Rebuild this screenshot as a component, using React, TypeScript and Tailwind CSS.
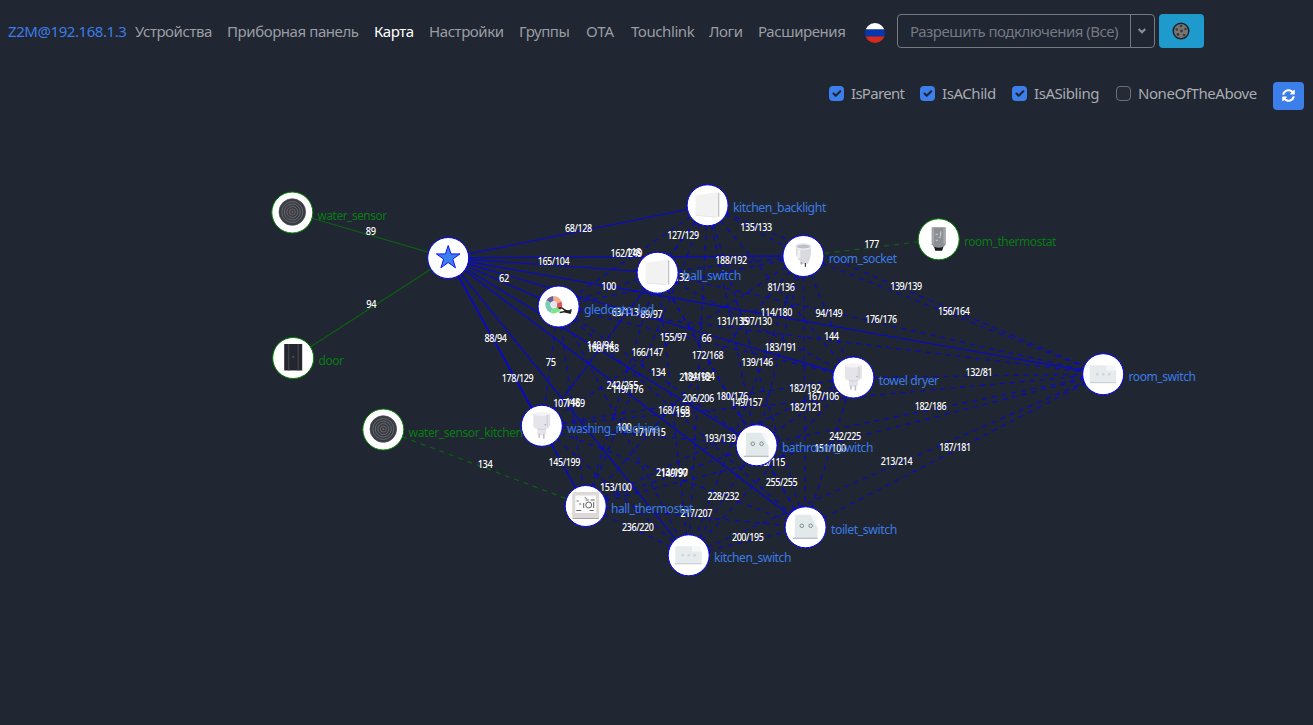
import React from "react";

type Kind = "star" | "water" | "door" | "square" | "socket" | "plug" | "thermo" | "valve" | "triple" | "double" | "led";
type NodeDef = { x: number; y: number; name?: string; width?: number; kind: Kind; end?: boolean };

const nodes: Record<string, NodeDef> = {
  star: { x: 448.2, y: 258, kind: "star" },
  ws: { x: 292.3, y: 212.5, name: "water_sensor", width: 69, kind: "water", end: true },
  door: { x: 293.2, y: 358, name: "door", width: 25, kind: "door", end: true },
  wsk: { x: 383.3, y: 429.5, name: "water_sensor_kitchen", width: 114, kind: "water", end: true },
  rt: { x: 938.7, y: 239.3, name: "room_thermostat", width: 92, kind: "valve", end: true },
  kb: { x: 707.6, y: 205.3, name: "kitchen_backlight", width: 93, kind: "square" },
  hs: { x: 657.6, y: 272.7, name: "hall_switch", width: 58, kind: "square" },
  rs: { x: 803.4, y: 256, name: "room_socket", width: 68, kind: "socket" },
  gl: { x: 558.6, y: 306.5, name: "gledopto_led", width: 70, kind: "led" },
  wm: { x: 541.8, y: 425.8, name: "washing_machine", width: 93, kind: "plug" },
  ht: { x: 585.7, y: 506, name: "hall_thermostat", width: 82, kind: "thermo" },
  ks: { x: 688.7, y: 555.3, name: "kitchen_switch", width: 77, kind: "triple" },
  ts: { x: 805.6, y: 527.3, name: "toilet_switch", width: 66, kind: "double" },
  bs: { x: 756.6, y: 445.3, name: "bathroom_switch", width: 91, kind: "double" },
  td: { x: 853.4, y: 377.5, name: "towel dryer", width: 60, kind: "plug" },
  rw: { x: 1103.2, y: 374.2, name: "room_switch", width: 67, kind: "triple" },
};

const links: [string, string, string][] = [
  ["ws", "star", "89"], ["door", "star", "94"], ["wsk", "ht", "134"], ["rt", "rs", "177"],
  ["star", "kb", "68/128"], ["star", "rs", "162/249"], ["star", "hs", "165/104"], ["star", "gl", "62"],
  ["star", "rw", "114/180"], ["star", "td", "89/97"], ["star", "bs", "166/168"], ["star", "ts", "119/176"],
  ["star", "ks", "107/169"], ["star", "ht", "178/129"], ["star", "wm", "88/94"],
  ["kb", "gl", "118"], ["kb", "wm", "63/113"], ["kb", "hs", "127/129"], ["kb", "rs", "135/133"],
  ["kb", "td", "81/136"], ["kb", "rw", "139/139"], ["kb", "bs", "131/135"], ["kb", "ts", "139/146"],
  ["kb", "ks", "184/184"], ["kb", "ht", "166/147"],
  ["hs", "rs", "188/192"], ["hs", "gl", "100"], ["hs", "wm", "140/94"], ["hs", "ht", "242/255"],
  ["hs", "ks", "168/168"], ["hs", "ts", "180/176"], ["hs", "bs", "172/168"], ["hs", "td", "197/130"], ["hs", "rw", "176/176"],
  ["rs", "gl", "132"], ["rs", "wm", "155/97"], ["rs", "ht", "212/192"], ["rs", "ks", "149/157"],
  ["rs", "ts", "182/192"], ["rs", "bs", "183/191"], ["rs", "td", "94/149"], ["rs", "rw", "156/164"],
  ["gl", "rw", "144"], ["gl", "td", "66"], ["gl", "bs", "134"], ["gl", "ts", "153"], ["gl", "ks", "100"],
  ["gl", "ht", "148"], ["gl", "wm", "75"],
  ["wm", "td", "206/206"], ["wm", "bs", "171/115"], ["wm", "ts", "149/97"], ["wm", "ks", "153/100"],
  ["wm", "ht", "145/199"], ["wm", "rw", "167/106"],
  ["ht", "td", "193/139"], ["ht", "bs", "213/190"], ["ht", "ts", "217/207"], ["ht", "ks", "236/220"], ["ht", "rw", "242/225"],
  ["ks", "bs", "228/232"], ["ks", "ts", "200/195"], ["ks", "td", "98/115"], ["ks", "rw", "213/214"],
  ["bs", "ts", "255/255"], ["bs", "td", "182/121"], ["bs", "rw", "182/186"],
  ["ts", "td", "151/100"], ["ts", "rw", "187/181"], ["td", "rw", "132/81"],
];

function Device({ kind }: { kind: Kind }) {
  switch (kind) {
    case "star":
      return <path d="M0-12.5 2.8-4.1H11.8L4.6 1.1 7.3 9.8 0 4.5-7.3 9.8-4.6 1.1-11.8-4.1H-2.8Z" fill="#3c7eea" stroke="#0000ff" strokeWidth=".9" />;
    case "water":
      return (
        <g fill="none" stroke="#777a80" strokeWidth=".7">
          <circle r="13.3" cy="-.5" fill="#383b42" stroke="#4a4d53" />
          <circle r="10.5" cy="-.5" />
          <circle r="8" cy="-.5" />
          <circle r="5.5" cy="-.5" />
          <circle r="3" cy="-.5" />
          <circle r=".9" cy="-.5" fill="#a8524d" stroke="none" />
        </g>
      );
    case "door":
      return (
        <g>
          <rect x="-9" y="-14" width="18" height="26.5" fill="#23252f" />
          <path d="M-4.500-14V12.500M5-14V12.500" stroke="#41434d" strokeWidth="1.2" />
          <circle r="1.2" cy="-1" fill="#474a53" />
        </g>
      );
    case "square":
      return (
        <g>
          <path d="M-12-10 10-13 12-12V11L9 12-12 10Z" fill="#f2f2f2" />
          <path d="M11-12.500V11.500" stroke="#c5c5c7" strokeWidth="1.2" />
          <path d="M-12 10 9 12" stroke="#e2e2e2" strokeWidth=".8" />
        </g>
      );
    case "socket":
      return (
        <g>
          <path d="M-7.500-9.500V-2Q-6.500 2-3.500 5L-2 8H4Q7 4 7.500-2V-9.500Z" fill="#d9d9e0" />
          <path d="M-4.500-6V2" stroke="#f0f0f5" strokeWidth="3" />
          <ellipse cy="-9.500" rx="7.500" ry="2.800" fill="#bfbfc7" stroke="#ececf1" strokeWidth="1.400" />
          <path d="M-2 6V8.500" stroke="#9a9aa2" strokeWidth="1.500" />
          <path d="M2 7V11" stroke="#44444a" strokeWidth="1.200" />
        </g>
      );
    case "plug":
      return (
        <g>
          <path d="M-8.500-12Q0-15.500 8.500-12V0Q7 3 4.500 3V8Q0 11-4.500 8V3Q-8 3-8.500 0Z" fill="#e6e4eb" />
          <ellipse cy="-12" rx="8" ry="2" fill="#f4f3f7" />
          <path d="M-4.500 3Q0 4.500 4.500 3" stroke="#cbc9d2" fill="none" strokeWidth=".9" />
          <path d="M5.500-11V1" stroke="#d6d4dd" strokeWidth="2" />
          <path d="M-2.500 8V12M2 8V13" stroke="#c1bfc8" strokeWidth="1.600" />
          <circle cx="3.500" cy="-1" r=".8" fill="#a9a7b0" />
        </g>
      );
    case "thermo":
      return (
        <g>
          <rect x="-13.500" y="-14" width="27" height="27" rx="2" fill="#dcd9d8" />
          <rect x="-10.500" y="-10.500" width="21" height="17.500" fill="#fbfbfb" />
          <path d="M-13 12.500H13" stroke="#aaa49f" />
          <g fill="none" stroke="#555" strokeWidth=".9">
            <circle cx="3" cy="-1" r="3" />
            <path d="M-2-3v5M8-4v6M0-6h3M5-6h4M-1-8.500l2 1M-9-5h2M-6.500-2h2M-9.500 4.500h5M4 4.500h4" />
          </g>
        </g>
      );
    case "valve":
      return (
        <g>
          <path d="M-7-12H7V5L4 9H-4L-7 5Z" fill="#8c8f94" />
          <path d="M-5.500-11V5M5.500-11V5" stroke="#a9abaf" strokeWidth="1.500" />
          <path d="M-3-5h2M0-2h2M2-8v5M-3 1h2" stroke="#e0e0e0" strokeWidth=".9" />
          <path d="M-4.500 7.500Q0 9.500 4.500 7.500L3.500 11.500H-3.500Z" fill="#18191c" />
        </g>
      );
    case "triple":
      return (
        <g>
          <path d="M-13.500-9H3.500V-4H13V8.500H-13.500Z" fill="#e6ebed" />
          <path d="M3.500-9H12V-4H4Z" fill="#f4f6f7" />
          <path d="M-13.500 8.500H13" stroke="#c3c9cb" strokeWidth="1" />
          <g fill="#cdd4d6"><circle cx="-6" r="1.300" /><circle r="1.300" /><circle cx="6" r="1.300" /></g>
        </g>
      );
    case "double":
      return (
        <g>
          <path d="M-10.500-12.500H5L12 1V11H-11Z" fill="#e2e9eb" />
          <path d="M5-12.500H11V-1Z" fill="#f5f7f8" />
          <path d="M-13 11H12" stroke="#b3b9bb" strokeWidth="1.200" />
          <g fill="none" stroke="#7a8285" strokeWidth=".9"><circle cx="-3.800" cy="-1.500" r="1.800" /><circle cx="5" cy="-1.500" r="1.800" /></g>
        </g>
      );
    case "led":
      return (
        <g>
          <g fill="none" strokeWidth="5">
            <path d="M-10-5A6.500 6.500 0 0 1-5-8" stroke="#6f5d96" />
            <path d="M-5-8A6.500 6.500 0 0 1 .5-4" stroke="#f2b08a" />
            <path d="M.5-4A6.500 6.500 0 0 1 0 2" stroke="#e2565c" />
            <path d="M0 2A6.500 6.500 0 0 1-7 4" stroke="#7be58a" />
            <path d="M-7 4A6.500 6.500 0 0 1-10-5" stroke="#7ccbb5" />
          </g>
          <circle cx="-4.500" cy="-2" r="3" fill="#e3e4f2" />
          <path d="M0 2Q3 0 6 3.500T13 3M1 6 7 5" fill="none" stroke="#25271f" strokeWidth="1.600" />
          <path d="M6 3 13 4.500 12 7.500 6 6Z" fill="#222" />
        </g>
      );
  }
}

function NetworkMap() {
  return (
    <svg className="block h-[605px] w-full font-['Noto_Sans',sans-serif]" viewBox="0 120 1313 605">
      {links.map(([a, b]) => {
        const s = nodes[a];
        const t = nodes[b];
        const green = s.end;
        const solid = a === "star" || b === "star";
        return (
          <line
            key={a + b}
            x1={s.x}
            y1={s.y}
            x2={t.x}
            y2={t.y}
            stroke={green ? "#008000" : "#0000ff"}
            strokeOpacity={green ? 0.65 : 0.68}
            strokeWidth={solid && !green ? 1.35 : 1.2}
            strokeDasharray={solid ? undefined : "5 5"}
          />
        );
      })}
      {links.map(([a, b, text]) => {
        const s = nodes[a];
        const t = nodes[b];
        const slash = text.includes("/");
        return (
          <text
            key={a + b}
            x={(s.x + t.x) / 2 + 0.5}
            y={(s.y + t.y) / 2}
            textAnchor="middle"
            fontSize="10"
            fontWeight="500"
            fill="#fff"
            textLength={slash ? (text.length - 1) * 4.65 + 3.6 : text.length * 4.9}
            lengthAdjust="spacingAndGlyphs"
          >
            {text}
          </text>
        );
      })}
      {Object.entries(nodes).map(([id, n]) => (
        <g key={id} transform={`translate(${n.x} ${n.y})`}>
          <circle r="20.5" fill="#fff" stroke={n.end ? "#008000" : "#0000ff"} />
          <Device kind={n.kind} />
          {n.name && (
            <text x="25.3" y="7" fontSize="12" fill={n.end ? "#087c12" : "#3c7ce6"} textLength={n.width} lengthAdjust="spacingAndGlyphs">
              {n.name}
            </text>
          )}
        </g>
      ))}
    </svg>
  );
}

function Check({ label, checked, className }: { label: string; checked?: boolean; className: string }) {
  return (
    <label className="flex items-center gap-[7px]">
      <span className={`flex size-[15px] items-center justify-center rounded ${checked ? "bg-[#3c7eea]" : "border border-[#6b6f77] bg-[#252a35]"}`}>
        {checked && (
          <svg className="size-[15px]" viewBox="0 0 20 20" fill="none" stroke="#1d2635" strokeWidth="2.800" strokeLinecap="round" strokeLinejoin="round">
            <path d="m6 10 3 3 6-6" />
          </svg>
        )}
      </span>
      <span className={`whitespace-nowrap ${className}`}>{label}</span>
    </label>
  );
}

export default function App() {
  return (
    <div className="h-[725px] w-[1313px] overflow-hidden bg-[#202632] font-['Noto_Sans',sans-serif] text-[15px] tracking-[-0.43px] text-[#a9abb0]">
      <header className="flex h-[62px] items-center pl-2">
        <span className="w-[127px] whitespace-nowrap text-[#3c7ce6]">Z2M@192.168.1.3</span>
        <nav className="flex items-center whitespace-nowrap text-[#9b9da3]">
          <span className="w-[92px]">Устройства</span>
          <span className="w-[147px]">Приборная панель</span>
          <span className="w-[55px] text-white">Карта</span>
          <span className="w-[90px]">Настройки</span>
          <span className="w-[67px]">Группы</span>
          <span className="w-[45px] tracking-normal">OTA</span>
          <span className="w-[78px]">Touchlink</span>
          <span className="w-[49px]">Логи</span>
          <span className="w-[107px]">Расширения</span>
        </nav>
        <svg className="mt-1 h-5 w-5" viewBox="0 0 20 20">
          <clipPath id="flag"><circle cx="10" cy="10" r="10" /></clipPath>
          <g clipPath="url(#flag)">
            <path fill="#fff" d="M0 0h20v6.500H0z" />
            <path fill="#0836ad" d="M0 6.500h20v7H0z" />
            <path fill="#d52b1e" d="M0 13.500h20V20H0z" />
          </g>
        </svg>
        <div className="ml-3 flex h-[34px] w-[258px] rounded border border-[#747982] text-[#747982]">
          <span className="flex w-[233px] items-center whitespace-nowrap border-r border-[#747982] pl-3 tracking-[-0.5px]">Разрешить подключения (Все)</span>
          <span className="flex flex-1 items-center justify-center pr-0.5">
            <svg width="8" height="6" viewBox="0 0 8 6" fill="none" stroke="#8c9098" strokeWidth="2"><path d="m.7 1 3.300 3.300L7.300 1" /></svg>
          </span>
        </div>
        <div className="ml-1 flex h-[34px] w-[45px] items-center justify-center rounded bg-[#1e9acd] pr-px">
          <svg width="18" height="18" viewBox="0 0 18 18">
            <circle cx="9" cy="9" r="7.800" fill="#777573" stroke="#18232b" strokeWidth="1.500" />
            <g fill="#3d3b3a"><circle cx="9" cy="4" r="1.300" /><circle cx="4.800" cy="7.500" r="1.300" /><circle cx="9.500" cy="9" r="1.400" /><circle cx="13.500" cy="7" r="1.200" /><circle cx="6" cy="12.500" r="1.400" /><circle cx="12" cy="13" r="1.300" /></g>
          </svg>
        </div>
      </header>
      <div className="flex h-[58px] items-center justify-end gap-4 pr-[9px] pt-[5px]">
        <Check label="IsParent" checked className="w-[53px] tracking-[-0.7px]" />
        <Check label="IsAChild" checked className="w-[54px]" />
        <Check label="IsASibling" checked className="w-[66px]" />
        <Check label="NoneOfTheAbove" className="w-[119px]" />
        <button className="mt-1 flex h-7 w-[31px] items-center justify-center rounded-sm bg-[#3c7eea]">
          <svg width="13" height="13" viewBox="0 0 512 512" fill="#fff">
            <path d="M370.700 133.300C339.500 104 298.900 88 255.800 88c-77.500.1-144.300 53.200-162.800 126.900-1.300 5.400-6.100 9.200-11.700 9.200H24.100c-7.500 0-13.200-6.800-11.800-14.200C33.900 94.900 134.800 8 256 8c66.400 0 126.800 26.100 171.300 68.700L463 41c15.100-15.100 41-4.400 41 17v134c0 13.300-10.700 24-24 24H346c-21.400 0-32.100-25.900-17-41l41.700-41.700zM32 296h134c21.400 0 32.100 25.900 17 41l-41.800 41.800c31.300 29.300 71.800 45.300 114.900 45.200 77.400-.1 144.300-53.100 162.800-126.800 1.300-5.400 6.100-9.200 11.700-9.200h57.300c7.500 0 13.200 6.800 11.800 14.200C478.100 417.100 377.200 504 256 504c-66.400 0-126.800-26.100-171.300-68.700L49 471c-15.100 15.100-41 4.400-41-17V320c0-13.300 10.700-24 24-24z" />
          </svg>
        </button>
      </div>
      <NetworkMap />
    </div>
  );
}
